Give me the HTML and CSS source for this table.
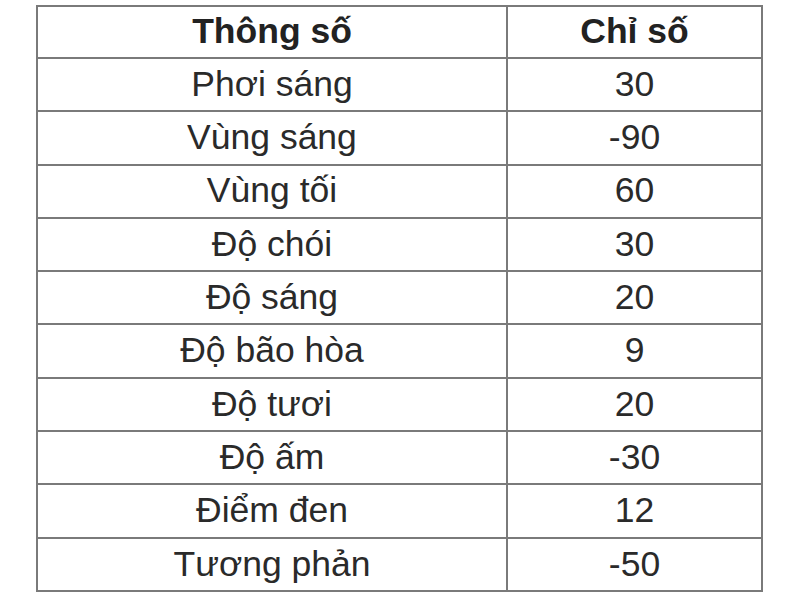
FILE: index.html
```html
<!DOCTYPE html>
<html lang="vi">
<head>
<meta charset="utf-8">
<link rel="stylesheet" href="styles.css">
</head>
<body>
<table class="spec">
  <thead>
    <tr><th class="c1">Thông số</th><th class="c2">Chỉ số</th></tr>
  </thead>
  <tbody>
    <tr><td>Phơi sáng</td><td>30</td></tr>
    <tr><td>Vùng sáng</td><td>-90</td></tr>
    <tr><td>Vùng tối</td><td>60</td></tr>
    <tr><td>Độ chói</td><td>30</td></tr>
    <tr><td>Độ sáng</td><td>20</td></tr>
    <tr><td>Độ bão hòa</td><td>9</td></tr>
    <tr><td>Độ tươi</td><td>20</td></tr>
    <tr><td>Độ ấm</td><td>-30</td></tr>
    <tr><td>Điểm đen</td><td>12</td></tr>
    <tr><td>Tương phản</td><td>-50</td></tr>
  </tbody>
</table>
</body>
</html>
```

FILE: styles.css
```css
html, body {
  margin: 0;
  padding: 0;
  background: #ffffff;
  overflow: hidden;
}
body {
  padding: 5px 0 0 36px;
  font-family: "Liberation Sans", Arial, sans-serif;
  color: #2a2a2a;
}
.spec {
  border-collapse: collapse;
  width: 721px;
  table-layout: fixed;
}
.spec th, .spec td {
  border: 2px solid #7a7a7a;
  text-align: center;
  vertical-align: middle;
  padding: 0;
  font-size: 35.5px;
  line-height: 1;
}
.spec th {
  height: 50px;
  font-weight: bold;
  color: #222;
}
.spec td {
  height: 51.3px;
  font-weight: normal;
}
.c1 { width: 468px; }
.c2 { width: 253px; }
```
